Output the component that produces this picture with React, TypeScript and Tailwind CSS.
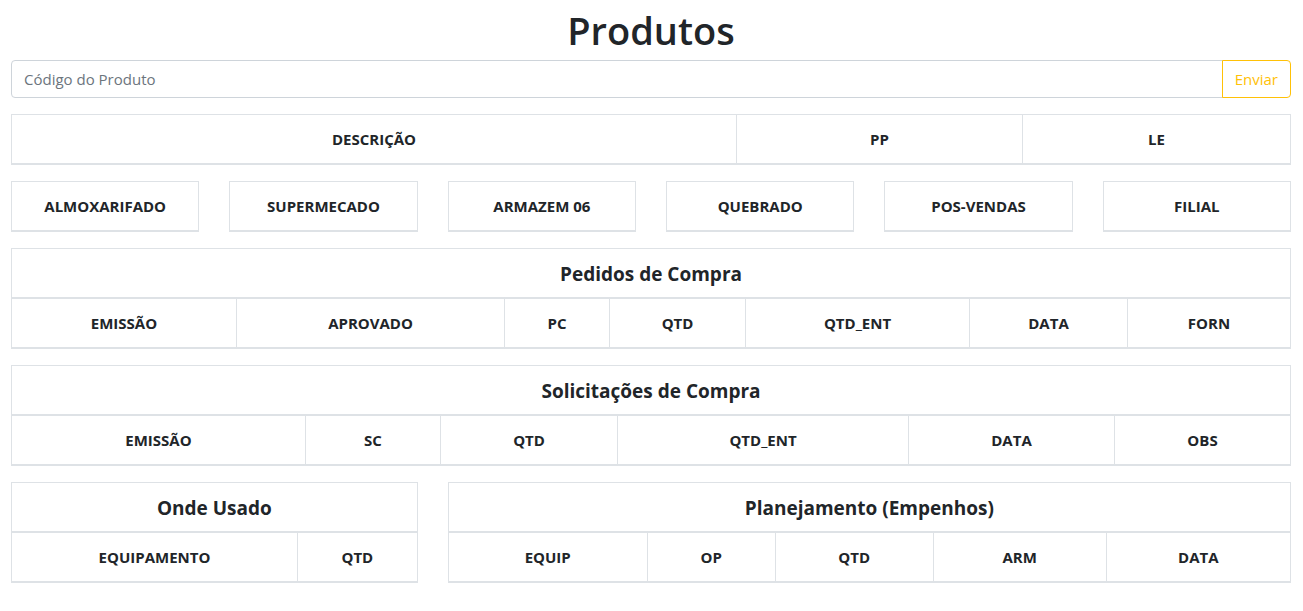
import React from 'react';

const th = 'border border-[#dee2e6] border-b-2 px-3 py-3 text-center font-bold leading-6 text-[15px]';
const title = 'border border-[#dee2e6] border-b-2 px-3 pt-[13px] pb-[11px] text-center font-bold leading-6 text-[19px]';

const HeadTable: React.FC<{ caption?: string; cols: { label: string; w?: string }[] }> = ({ caption, cols }) => (
  <table className="w-full table-fixed border-collapse mb-4">
    <colgroup>
      {cols.map((c) => (
        <col key={c.label} className={c.w ?? ''} />
      ))}
    </colgroup>
    <thead>
      {caption && (
        <tr>
          <th colSpan={cols.length} className={title}>{caption}</th>
        </tr>
      )}
      <tr>
        {cols.map((c) => (
          <th key={c.label} className={th}>{c.label}</th>
        ))}
      </tr>
    </thead>
  </table>
);

const estoques = ['ALMOXARIFADO', 'SUPERMECADO', 'ARMAZEM 06', 'QUEBRADO', 'POS-VENDAS', 'FILIAL'];

export default function App() {
  return (
    <div className="min-h-screen bg-white text-[#212529]" style={{ fontFamily: '"Open Sans", "Noto Sans", sans-serif' }}>
      <div className="w-[1280px] ml-[11px]">
        <h1 className="text-center text-[38px] leading-[48px] font-semibold pt-[6px] mb-[6px]">Produtos</h1>

        <div className="flex mb-4 h-[38px]">
          <input
            placeholder="Código do Produto"
            className="flex-1 border border-[#ced4da] rounded-l px-3 text-[15px] placeholder:text-[#6c757d] outline-none"
          />
          <button className="border border-[#ffc107] text-[#ffc107] rounded-r px-3 text-[15px] -ml-px">Enviar</button>
        </div>

        <HeadTable
          cols={[
            { label: 'DESCRIÇÃO', w: 'w-[725px]' },
            { label: 'PP', w: 'w-[286px]' },
            { label: 'LE' },
          ]}
        />

        <div className="grid grid-cols-6 gap-x-[30px]">
          {estoques.map((e) => (
            <HeadTable key={e} cols={[{ label: e }]} />
          ))}
        </div>

        <HeadTable
          caption="Pedidos de Compra"
          cols={[
            { label: 'EMISSÃO', w: 'w-[225px]' },
            { label: 'APROVADO', w: 'w-[268px]' },
            { label: 'PC', w: 'w-[105px]' },
            { label: 'QTD', w: 'w-[136px]' },
            { label: 'QTD_ENT', w: 'w-[224px]' },
            { label: 'DATA', w: 'w-[158px]' },
            { label: 'FORN' },
          ]}
        />

        <HeadTable
          caption="Solicitações de Compra"
          cols={[
            { label: 'EMISSÃO', w: 'w-[294px]' },
            { label: 'SC', w: 'w-[135px]' },
            { label: 'QTD', w: 'w-[177px]' },
            { label: 'QTD_ENT', w: 'w-[291px]' },
            { label: 'DATA', w: 'w-[206px]' },
            { label: 'OBS' },
          ]}
        />

        <div className="grid grid-cols-3 gap-x-[30px]">
          <HeadTable
            caption="Onde Usado"
            cols={[{ label: 'EQUIPAMENTO', w: 'w-[286px]' }, { label: 'QTD' }]}
          />
          <div className="col-span-2">
            <HeadTable
              caption="Planejamento (Empenhos)"
              cols={[
                { label: 'EQUIP', w: 'w-[199px]' },
                { label: 'OP', w: 'w-[128px]' },
                { label: 'QTD', w: 'w-[158px]' },
                { label: 'ARM', w: 'w-[173px]' },
                { label: 'DATA' },
              ]}
            />
          </div>
        </div>
      </div>
    </div>
  );
}
